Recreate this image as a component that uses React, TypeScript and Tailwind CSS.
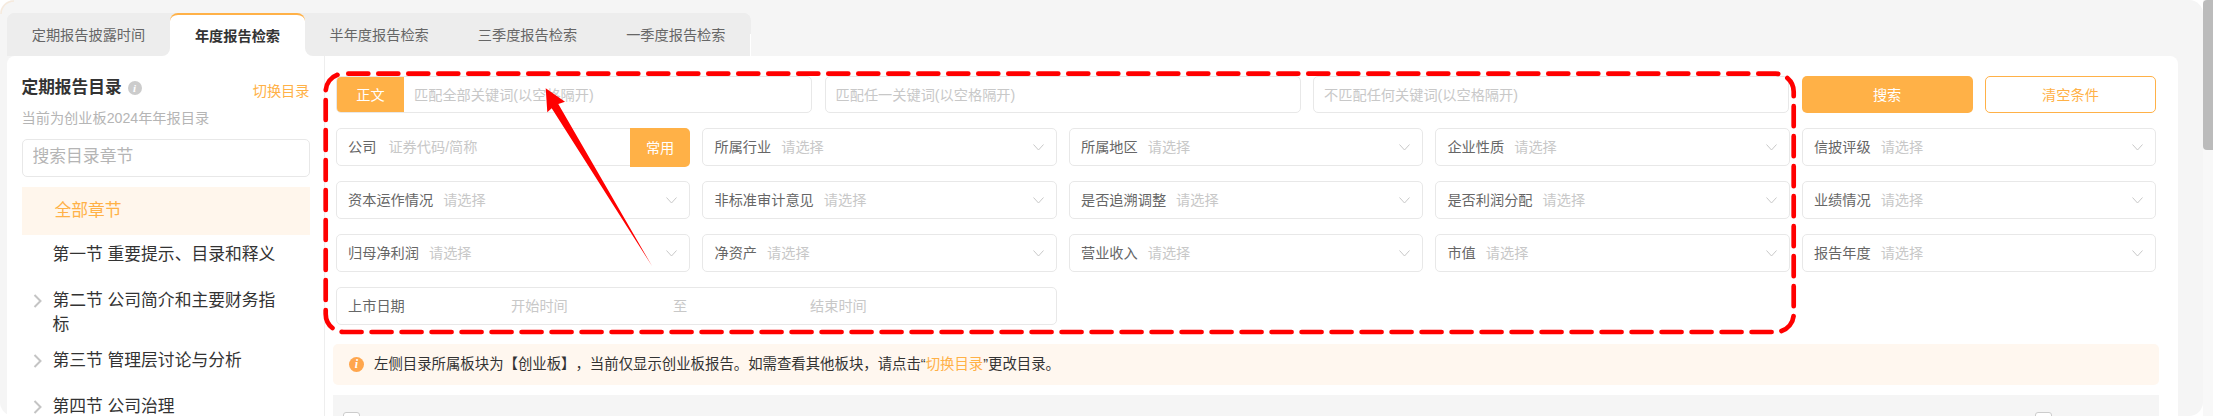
import React from 'react';

const tabs = [
  { label: '定期报告披露时间', cls: 'w-[163px] rounded-br-lg bg-[#ededed] text-[#666]' },
  { label: '年度报告检索', cls: 'w-[135px] rounded-t-lg border-t-2 border-[#ffb147] bg-white font-bold text-[#333]' },
  { label: '半年度报告检索', cls: 'w-[148.3px] rounded-bl-lg bg-[#ededed] text-[#666]' },
  { label: '三季度报告检索', cls: 'w-[148.3px] bg-[#ededed] text-[#666]' },
  { label: '一季度报告检索', cls: 'w-[148.4px] bg-[#ededed] text-[#666]' },
];

const chapters = [
  { label: '第一节 重要提示、目录和释义', arrow: false, cls: 'mt-[8px]' },
  { label: '第二节 公司简介和主要财务指标', arrow: true, cls: 'mt-[22px]' },
  { label: '第三节 管理层讨论与分析', arrow: true, cls: 'mt-[12px]' },
  { label: '第四节 公司治理', arrow: true, cls: 'mt-[22px]' },
];

const selects = [
  '所属行业', '所属地区', '企业性质', '信披评级',
  '资本运作情况', '非标准审计意见', '是否追溯调整', '是否利润分配', '业绩情况',
  '归母净利润', '净资产', '营业收入', '市值', '报告年度',
];

const boxCls = 'flex h-[37.4px] items-center rounded-[5px] border border-[#e8e8e8] bg-white';
const inputCls = 'w-full min-w-0 bg-transparent outline-none placeholder:text-[#c8c8c8]';

const InfoIcon = ({ className }: { className: string }) => (
  <span className={`flex shrink-0 items-center justify-center rounded-full font-['Liberation_Serif',serif] font-bold italic text-white ${className}`}>i</span>
);

const SelectBox = ({ label }: { label: string }) => (
  <div className={`${boxCls} pl-[11px] pr-[12px]`}>
    <span className="text-[#666]">{label}</span>
    <span className="ml-[10px] text-[#c8c8c8]">请选择</span>
    <svg className="ml-auto" width="11" height="7" viewBox="0 0 11 7" fill="none" stroke="#c8c8c8" strokeWidth="1">
      <polyline points="0.5,0.5 5.5,6 10.5,0.5" />
    </svg>
  </div>
);

export default function App() {
  return (
    <div className="relative flex h-[416px] w-full overflow-hidden bg-white font-['Liberation_Sans','Noto_Sans_CJK_SC',sans-serif] text-[14.2px] leading-5 [text-spacing-trim:space-all]">
      <div className="min-w-0 flex-1 rounded-[14px] bg-[#f5f5f5] pl-[7px] pt-[13px]">
        {/* tabs */}
        <div className="flex h-[43px] w-[744px] overflow-hidden rounded-t-lg bg-[linear-gradient(#ededed_50%,#fff_50%)]">
          {tabs.map(tab => (
            <div key={tab.label} className={`flex shrink-0 items-center justify-center ${tab.cls}`}>{tab.label}</div>
          ))}
        </div>

        <div className="flex h-[700px] w-[2171px] rounded-lg bg-white">
          {/* chapter tree */}
          <aside className="w-[318px] shrink-0 border-r border-[#eeeeee] pl-[14.5px] pr-[14.5px] pt-[19px]">
            <div className="flex items-center">
              <h3 className="text-[16.7px] font-bold leading-6 text-[#333]">定期报告目录</h3>
              <InfoIcon className="ml-[6px] h-[14px] w-[14px] bg-[#cccccc] text-[11px]" />
              <span className="ml-auto mt-[6px] text-[#ffb147]">切换目录</span>
            </div>
            <p className="mt-[7px] text-[#b5b5b5]">当前为创业板2024年年报目录</p>
            <div className="mt-[11px] flex h-[38px] items-center rounded-[5px] border border-[#e8e8e8] px-[10px] pb-[2px] text-[16.8px]">
              <input readOnly placeholder="搜索目录章节" className="w-full bg-transparent outline-none placeholder:text-[#b5b5b5]" />
            </div>
            <div className="mt-[10px] flex h-[48px] items-center bg-[#fff6ec] pl-[33px] text-[16.8px] text-[#ffb147]">全部章节</div>
            <ul className="text-[16.8px] leading-6 text-[#333]">
              {chapters.map(c => (
                <li key={c.label} className={`relative pl-[31px] pr-[20px] ${c.cls}`}>
                  {c.arrow && (
                    <svg className="absolute left-[11px] top-[5px]" width="9" height="14" viewBox="0 0 9 14" fill="none" stroke="#c4c4c4" strokeWidth="2">
                      <polyline points="1.5,1 7.5,7 1.5,13" />
                    </svg>
                  )}
                  {c.label}
                </li>
              ))}
            </ul>
          </aside>

          {/* search form */}
          <main className="min-w-0 flex-1 pl-[8px] pr-[19px] pt-[20px]">
            <div className="mx-[3px]">
              <div className="flex gap-[12.4px]">
                <div className={`${boxCls} flex-1 overflow-hidden`}>
                  <span className="flex h-full w-[67px] shrink-0 items-center justify-center bg-[#ffb147] text-white">正文</span>
                  <input readOnly placeholder="匹配全部关键词(以空格隔开)" className={`${inputCls} pl-[10px]`} />
                </div>
                <div className={`${boxCls} flex-1`}>
                  <input readOnly placeholder="匹配任一关键词(以空格隔开)" className={`${inputCls} pl-[10px]`} />
                </div>
                <div className={`${boxCls} flex-1`}>
                  <input readOnly placeholder="不匹配任何关键词(以空格隔开)" className={`${inputCls} pl-[10px]`} />
                </div>
                <button className="h-[37.4px] w-[171px] rounded-[5px] bg-[#ffb147] text-white">搜索</button>
                <button className="h-[37.4px] w-[171px] rounded-[5px] border border-[#ffb147] bg-white text-[#ffb147]">清空条件</button>
              </div>

              <div className="mt-[15px] grid grid-cols-5 gap-x-[12.4px] gap-y-[15.6px]">
                <div className={`${boxCls} pl-[11px]`}>
                  <span className="shrink-0 text-[#666]">公司</span>
                  <input readOnly placeholder="证券代码/简称" className={`${inputCls} ml-[12px]`} />
                  <span className="-mb-[2px] -mr-px -mt-px flex h-[39px] w-[60px] shrink-0 items-center justify-center rounded-r-[5px] bg-[#ffb147] text-white">常用</span>
                </div>
                {selects.map(label => <SelectBox key={label} label={label} />)}
                <div className={`${boxCls} col-span-2 pl-[11px] text-[#c8c8c8]`}>
                  <span className="w-[163px] text-[#666]">上市日期</span>
                  <span className="w-[162px]">开始时间</span>
                  <span className="w-[137px]">至</span>
                  <span>结束时间</span>
                </div>
              </div>
            </div>

            <div className="mt-[19.2px] flex h-[41px] items-center rounded-[5px] bg-[#fff7ef] pl-[16px] text-[14.4px] text-[#333]">
              <InfoIcon className="h-[15px] w-[15px] bg-[#ffa64d] text-[12px]" />
              <span className="ml-[10px]">左侧目录所属板块为【创业板】，当前仅显示创业板报告。如需查看其他板块，请点击“<span className="text-[#ffb147]">切换目录</span>”更改目录。</span>
            </div>

            <div className="mt-[10px] flex h-[60px] justify-between bg-[#f5f5f5] pl-[10px] pr-[107px] pt-[17px]">
              <span className="h-[17px] w-[17px] rounded-[3px] border border-[#cccccc] bg-white" />
              <span className="h-[17px] w-[17px] rounded-[3px] border border-[#cccccc] bg-white" />
            </div>
          </main>
        </div>
      </div>

      {/* scrollbar */}
      <div className="w-[10px] shrink-0 bg-[#f8f8f8]">
        <div className="h-[150px] rounded-l-[4px] bg-[#bbbbbb]" />
      </div>

      {/* red annotation drawn over the page */}
      <svg className="pointer-events-none absolute left-0 top-0" width="2213" height="416" fill="none">
        <path d="M1 14A13 13 0 0 1 14 1" stroke="#f6eadd" strokeWidth="1.5" />
        <rect x="325.7" y="73.7" width="1468" height="258.3" rx="18" stroke="#ff0000" strokeWidth="4.7" strokeLinecap="round" strokeDasharray="20 10" strokeDashoffset="-4.6" />
        <polygon points="545.7,88.3 565,101.7 558.3,104 652,266 551.7,108.3 547.3,112.3" fill="#ff0000" />
      </svg>
    </div>
  );
}
